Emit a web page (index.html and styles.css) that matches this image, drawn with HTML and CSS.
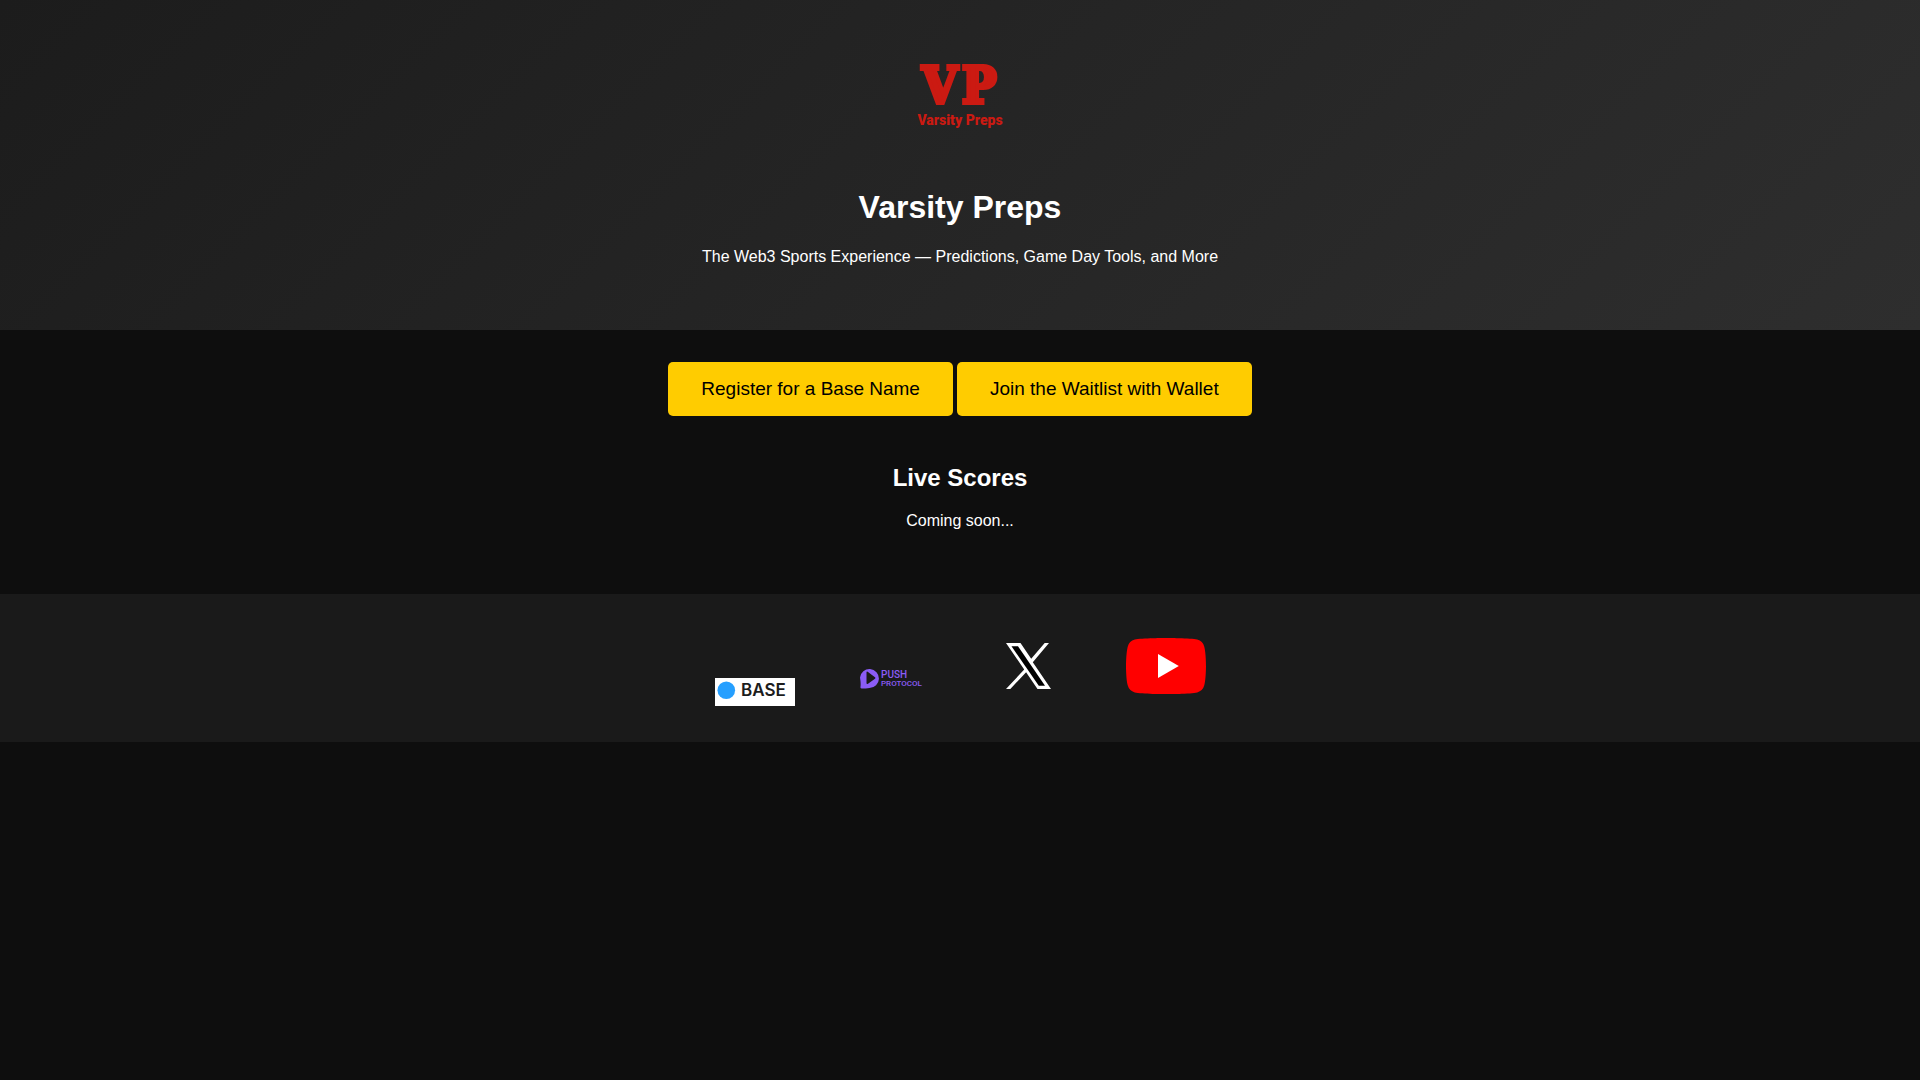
FILE: index.html
```html
<!DOCTYPE html>
<html lang="en">
<head>
<meta charset="utf-8">
<meta name="viewport" content="width=device-width, initial-scale=1">
<title>Varsity Preps</title>
<link rel="stylesheet" href="styles.css">
</head>
<body>
<header class="hero">
  <svg class="hero-logo" viewBox="0 0 120 120" role="img" aria-label="Varsity Preps logo">
    <text class="logo-mark" x="22" y="55">V</text>
    <text class="logo-mark" x="62" y="55">P</text>
    <text class="logo-name" x="60" y="77">Varsity Preps</text>
  </svg>
  <h1 class="hero-title">Varsity Preps</h1>
  <p class="text">The Web3 Sports Experience — Predictions, Game Day Tools, and More</p>
</header>
<main>
  <div class="actions">
    <button class="button" type="button">Register for a Base Name</button>
    <button class="button" type="button">Join the Waitlist with Wallet</button>
  </div>
  <section class="scores">
    <h2 class="scores-title">Live Scores</h2>
    <p class="text">Coming soon...</p>
  </section>
</main>
<footer class="footer">
  <a class="partner" href="#base" aria-label="Base">
    <svg class="partner-logo" viewBox="0 0 80 28">
      <rect width="80" height="28" fill="#fff"/>
      <circle cx="11.3" cy="12.3" r="8.8" fill="#259fff"/>
      <text class="base-name" x="26" y="18">BASE</text>
    </svg>
  </a>
  <a class="partner" href="#push" aria-label="Push Protocol">
    <svg class="partner-logo" viewBox="0 0 80 56">
      <path fill="#8b5cf6" fill-rule="evenodd" d="M8 27.500a9.500 9.500 0 1 1 9.500 10.500Q14 38.500 9.500 38.500 8 38.500 8.500 36.500 9 34 8 27.500ZM14.500 22.500v10.500q0 1.500 1.500.800l7-5q1-.800 0-1.600l-7-5.300q-1.500-.800-1.500.600Z"/>
      <text class="push-name" x="29" y="28">PUSH</text>
      <text class="push-sub" x="29" y="36">PROTOCOL</text>
    </svg>
  </a>
  <a class="partner" href="#x" aria-label="X">
    <svg class="partner-logo" viewBox="0 0 80 80">
      <path fill="#fff" d="M60 17h-4.300L42.200 32.700 31.500 17H17l18.200 26.500L17 63h4.300l15.800-16.800L48.500 63H62L43.800 36.200Z"/>
      <path fill="#000" d="M22.500 20.300H29L56 59.700h-6.200Z"/>
    </svg>
  </a>
  <a class="partner" href="#youtube" aria-label="YouTube">
    <svg class="partner-logo" viewBox="0 0 80 80">
      <path fill="#f00" d="M78.300 20.700a10 10 0 0 0-7.100-7.100C65 12 40 12 40 12s-25 0-31.200 1.600a10 10 0 0 0-7.100 7.100C0 27 0 40 0 40s0 13 1.700 19.300a10 10 0 0 0 7.100 7.100C15 68 40 68 40 68s25 0 31.200-1.600a10 10 0 0 0 7.100-7.100C80 53 80 40 80 40s0-13-1.700-19.300Z"/>
      <path fill="#fff" d="M32 52V28l20.800 12Z"/>
    </svg>
  </a>
</footer>
</body>
</html>
```
FILE: styles.css
```css
body {
  margin: 0;
  background: #0e0e0e;
  color: #fff;
  font-family: "Liberation Sans", Arial, sans-serif;
  font-size: 16px;
  text-align: center;
}

.hero {
  padding: 48px 16px;
  background: linear-gradient(135deg, #1c1c1c, #2e2e2e);
}

.hero-logo {
  display: block;
  width: 120px;
  height: 120px;
  margin: 0 auto;
}

.logo-mark {
  fill: #cb1a12;
  stroke: #cb1a12;
  stroke-width: 4px;
  font: bold 51px "DejaVu Serif Condensed", "DejaVu Serif", serif;
}

.logo-name {
  fill: #cb1a12;
  font: 900 14px Roboto, sans-serif;
  text-anchor: middle;
}

.hero-title {
  margin: 21px 0;
  font-size: 32px;
  line-height: 37px;
}

.text {
  margin: 16px 0;
  line-height: 19px;
}

.actions {
  display: flex;
  flex-wrap: wrap;
  justify-content: center;
  gap: 4px;
  padding: 32px 16px 0;
}

.button {
  padding: 16px 33px;
  border: 0;
  border-radius: 5px;
  background: #fc0;
  color: #000;
  font-family: inherit;
  font-size: 19px;
  line-height: 22px;
  cursor: pointer;
}

.scores {
  padding: 48px 16px;
}

.scores-title {
  margin: 0 0 20px;
  font-size: 24px;
  line-height: 27px;
}

.footer {
  display: flex;
  flex-wrap: wrap;
  justify-content: center;
  align-items: flex-end;
  gap: 57px;
  padding: 32px 16px 36px;
  background: #1a1a1a;
}

.partner-logo {
  display: block;
  width: 80px;
}

.base-name {
  fill: #1c1c1c;
  font: 600 17px Inter, sans-serif;
}

.push-name,
.push-sub {
  fill: #8b5cf6;
  font: 500 10px Roboto, sans-serif;
}

.push-sub {
  font-size: 8px;
}
```
